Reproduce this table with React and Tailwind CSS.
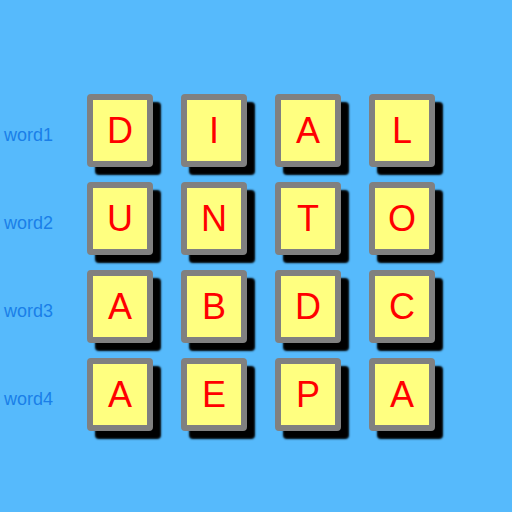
import React from 'react';

const rows = [
  { label: 'word1', letters: ['D', 'I', 'A', 'L'] },
  { label: 'word2', letters: ['U', 'N', 'T', 'O'] },
  { label: 'word3', letters: ['A', 'B', 'D', 'C'] },
  { label: 'word4', letters: ['A', 'E', 'P', 'A'] },
];

function Tile({ letter }) {
  return (
    <div className="w-[66px] h-[73px] shrink-0 rounded-[4px] border-[6px] border-[#808080] bg-[#ffff80] shadow-[8px_8px_2px_#000] flex items-center justify-center">
      <span className="text-[36px] leading-none text-[#ff0000]">{letter}</span>
    </div>
  );
}

export default function App() {
  return (
    <div
      className="w-[512px] h-[512px] bg-[#56bafc] flex flex-col pt-[94px] gap-[15px]"
      style={{ fontFamily: '"Liberation Sans", Arial, sans-serif' }}
    >
      {rows.map((row) => (
        <div key={row.label} className="flex items-center">
          <div className="w-[87px] pl-[4px] pt-[10px] text-[18px] text-[#1a7fe8]">{row.label}</div>
          <div className="flex gap-[28px]">
            {row.letters.map((l, i) => (
              <Tile key={i} letter={l} />
            ))}
          </div>
        </div>
      ))}
    </div>
  );
}
